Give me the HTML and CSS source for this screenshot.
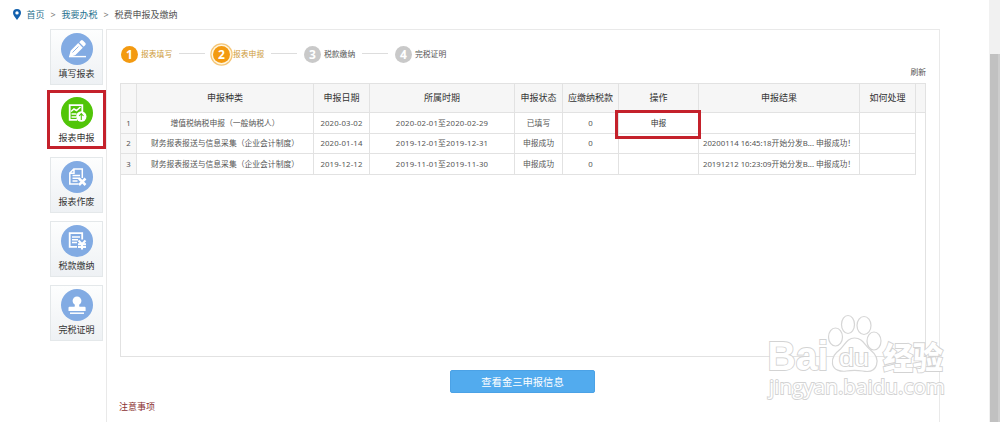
FILE: index.html
```html
<!DOCTYPE html>
<html lang="zh-CN">
<head>
<meta charset="utf-8">
<title>税费申报及缴纳</title>
<link rel="stylesheet" href="styles.css">
</head>
<body>
<div class="page">
  <div class="content">
    <nav class="crumbs">
      <svg class="pin" viewBox="0 0 8 11"><path fill="#1260ad" fill-rule="evenodd" d="M4 0a4 4 0 0 1 4 4C8 6.600 5.500 8.500 4 11 2.500 8.500 0 6.600 0 4a4 4 0 0 1 4-4zm0 2.200a1.700 1.700 0 1 0 0 3.400 1.700 1.700 0 0 0 0-3.400z"/></svg>
      <a class="link">首页</a><span class="sep">&gt;</span><a class="link">我要办税</a><span class="sep">&gt;</span><span>税费申报及缴纳</span>
    </nav>
    <div class="main">
      <aside class="side">
        <a class="tile">
          <svg class="ico" viewBox="0 0 32 32"><circle cx="16" cy="16" r="16" fill="#82abe3"/><path d="M8 24l1.600-6.300 7.600-7.600 4.600 4.600-7.600 7.600zM18.200 9.200l1.700-1.700q1-.8 2 0l2.500 2.500q.8 1 0 2l-1.700 1.700z" fill="#fff"/><path d="M8 23.600H25" stroke="#fff" stroke-width="1.400"/><path d="M11.500 19.500l6-6" stroke="#82abe3" stroke-width=".9"/></svg>
          <span>填写报表</span></a>
        <a class="tile active">
          <svg class="ico" viewBox="0 0 32 32"><circle cx="16" cy="16" r="16" fill="#51c508"/><path d="M21.300 15V8.200H8.700v14.600H16" fill="none" stroke="#fff" stroke-width="1.800"/><path d="M10 14.500l3-2.500 2.500 1.500 4-3.500M10.500 17h5M10.500 20h4.500" fill="none" stroke="#fff" stroke-width="1.600"/><circle cx="20.300" cy="19.500" r="5.200" fill="#fff"/><path d="M20.300 23v-6M18.100 19l2.200-2.400 2.200 2.400" fill="none" stroke="#51c508" stroke-width="1.100"/></svg>
          <span>报表申报</span></a>
        <a class="tile">
          <svg class="ico" viewBox="0 0 32 32"><circle cx="16" cy="16" r="16" fill="#82abe3"/><path d="M17.500 23H8.800V12l4-4h8.500v9M13 8v4.200H9M11.500 14.500h7.500M11.500 17.200h7.500M11.500 20h5" fill="none" stroke="#fff" stroke-width="1.500"/><path d="M18 17.500l6.500 6.500M24.500 17.500l-6.500 6.500" stroke="#fff" stroke-width="2.500"/></svg>
          <span>报表作废</span></a>
        <a class="tile">
          <svg class="ico" viewBox="0 0 32 32"><circle cx="16" cy="16" r="16" fill="#82abe3"/><path d="M21.200 14.500V8.200H8.700v13.600H16" fill="none" stroke="#fff" stroke-width="1.800"/><path d="M11 12h8M11 14.700h6M11 17.500h5" stroke="#fff" stroke-width="1.500"/><path d="M17.500 15.500l3.500 3.800 3.500-3.800M21 19v5.500M17 19.300h8M17 22h8" fill="none" stroke="#fff" stroke-width="2.100"/></svg>
          <span>税款缴纳</span></a>
        <a class="tile">
          <svg class="ico" viewBox="0 0 32 32"><circle cx="16" cy="16" r="16" fill="#82abe3"/><circle cx="16" cy="11.800" r="4.400" fill="#fff"/><path d="M14.200 14h3.600l.6 3.800h5.200q1 0 1 1V22H7.500v-3.200q0-1 1-1h5.100z" fill="#fff"/><path d="M9 24.200h14" stroke="#fff" stroke-width="1.500"/></svg>
          <span>完税证明</span></a>
      </aside>
      <section class="panel">
        <div class="steps">
          <div class="step done"><b>1</b><span>报表填写</span></div><i></i>
          <div class="step done current"><b>2</b><span>报表申报</span></div><i></i>
          <div class="step"><b>3</b><span>税款缴纳</span></div><i></i>
          <div class="step"><b>4</b><span>完税证明</span></div>
        </div>
        <div class="refresh">刷新</div>
        <div class="table">
          <div class="row head"><span></span><span>申报种类</span><span>申报日期</span><span>所属时期</span><span>申报状态</span><span>应缴纳税款</span><span>操作</span><span>申报结果</span><span>如何处理</span></div>
          <div class="row first"><span>1</span><span>增值税纳税申报（一般纳税人）</span><span class="date">2020-03-02</span><span class="date">2020-02-01至2020-02-29</span><span>已填写</span><span>0</span><span class="act">申报<em class="mark"></em></span><span></span><span></span></div>
          <div class="row"><span>2</span><span>财务报表报送与信息采集（企业会计制度）</span><span class="date">2020-01-14</span><span class="date">2019-12-01至2019-12-31</span><span>申报成功</span><span>0</span><span></span><span>20200114 16:45:18开始分发B... 申报成功！</span><span></span></div>
          <div class="row last"><span>3</span><span>财务报表报送与信息采集（企业会计制度）</span><span class="date">2019-12-12</span><span class="date">2019-11-01至2019-11-30</span><span>申报成功</span><span>0</span><span></span><span>20191212 10:23:09开始分发B... 申报成功！</span><span></span></div>
        </div>
        <button class="btn">查看金三申报信息</button>
        <div class="notes">注意事项</div>
      </section>
    </div>
  </div>
  <div class="scroll"><div class="thumb"></div></div>
  <svg class="brand" viewBox="0 0 190 90">
    <g class="shape">
      <ellipse cx="69.500" cy="25" rx="7" ry="9"/>
      <ellipse cx="82" cy="12.500" rx="6.500" ry="9"/>
      <ellipse cx="98" cy="13.500" rx="7" ry="9"/>
      <ellipse cx="108" cy="29" rx="7" ry="9"/>
      <path d="M88.500 26c8 0 10 7 16 12 5 4 8 9 6 15-2 7-9 7-14 6-6-1-10-1-16 0-6 1-13-1-14-7-1-7 3-11 8-15 5-5 7-11 14-11z"/>
    </g>
    <g class="word">
      <text x="1.500" y="58" font-size="40" textLength="61" lengthAdjust="spacingAndGlyphs">Bai</text>
      <text class="du" x="73" y="54" font-size="23" textLength="30" lengthAdjust="spacingAndGlyphs">du</text>
      <text class="cn" x="117" y="57" font-size="31" textLength="60" lengthAdjust="spacingAndGlyphs">经验</text>
      <text class="site" x="3" y="81.500" font-size="20.500" textLength="176" lengthAdjust="spacingAndGlyphs">jingyan.baidu.com</text>
    </g>
  </svg>
</div>
</body>
</html>
```
FILE: styles.css
```css
* { box-sizing: border-box; }
body { margin: 0; background: #fff; color: #555; font: 9px/12px "Noto Sans", "Noto Sans CJK SC", sans-serif; }
.page { position: relative; display: flex; width: 1000px; height: 422px; overflow: hidden; }
.content { width: 989px; }
.crumbs { display: flex; align-items: center; height: 29px; padding-left: 13px; white-space: nowrap; }
.pin { width: 8px; height: 11px; margin-right: 5.500px; }
.link { color: #28728f; }
.sep { width: 17px; text-align: center; color: #777; font-size: 9px; }
.main { display: flex; padding-left: 50px; gap: 3px; }
.side { display: flex; flex-direction: column; gap: 8px; width: 53px; }
.tile { display: flex; flex-direction: column; align-items: center; gap: 3px; width: 53px; height: 56px; padding-top: 3px; border: 1px solid #e4e8ea; background: linear-gradient(#fdfefe, #eef1f4); color: #333; white-space: nowrap; }
.tile.active { height: 53px; margin-bottom: 3px; background: #fff; outline: 3px solid #c4212b; border-color: #fff; }
.ico { width: 32px; height: 32px; flex: none; }
.panel { display: flex; flex-direction: column; width: 834px; height: 400px; padding: 13px 13px 0 13px; border: 1px solid #e9e9e9; }
.steps { display: flex; align-items: center; height: 22px; margin-left: 1px; font-size: 7.8px; white-space: nowrap; }
.step { display: flex; align-items: center; gap: 3px; width: 52px; }
.step b { width: 17px; height: 17px; border-radius: 50%; background: #c9c9c9; color: #fff; font: bold 12px/17px "Open Sans", "Noto Sans", sans-serif; text-align: center; flex: none; }
.step.done { color: #cd9b3a; }
.step.done b { background: #f39a11; }
.step.current b { box-shadow: 0 0 0 1.5px #fff6df, 0 0 0 2.700px #f5c678; }
.steps i { width: 26px; height: 1px; margin: 0 7px 2px 6px; background: #ddd; }
.steps i:nth-of-type(1) { margin-right: 8px; }
.refresh { height: 18px; text-align: right; font-size: 7.800px; line-height: 14px; }
.table { width: 806px; height: 274px; border: 1px solid #e2e2e2; font-size: 7.800px; }
.row { display: grid; grid-template-columns: 16px 177px 56px 145px 48px 56px 80px 161px 56px; height: 20px; white-space: nowrap; }
.row span { display: flex; align-items: center; justify-content: center; padding-bottom: 1px; border-right: 1px solid #e2e2e2; border-bottom: 1px solid #e2e2e2; }
.row span:first-child { background: #f7f7f7; }
.row.head { height: 29px; background: #f6f6f6; border-bottom: 1px solid #e2e2e2; color: #333; font-size: 9px; }
.row.head span { border-bottom: 0; }
.row.first, .row.last { height: 21px; }
.row span.date { letter-spacing: .15px; }
.row span.act { position: relative; color: #333; }
.mark { position: absolute; left: -4px; top: -3px; width: 86px; height: 29px; border: 3px solid #c4212b; }
.btn { width: 145px; height: 23px; margin: 13px 0 0 330px; padding: 0; border: 1px solid #4ba2e6; border-radius: 2px; background: #52abee; color: #fff; font: 10.300px/21px "Noto Sans CJK SC", sans-serif; }
.notes { margin: 8px 0 0 -1px; color: #8b3232; }
.scroll { width: 11px; padding: 54px 0 0 1px; background: #f1f1f1; }
.thumb { width: 10px; height: 368px; background: #c1c1c1; border-right: 2px solid #cdcdcd; }
.brand { position: absolute; left: 766px; top: 312px; width: 190px; height: 90px; overflow: visible; }
.shape { fill: rgba(255, 255, 255, .8); stroke: #d6d6d6; stroke-width: 1.200; }
.word { fill: #fff; stroke: #d3d3d3; stroke-width: 1.800; paint-order: stroke; font-family: "Liberation Sans", Arial, sans-serif; font-weight: bold; }
.du { font-weight: normal; }
.cn { font-family: "Noto Sans CJK SC", sans-serif; font-weight: 900; }
.site { font-family: "Open Sans", sans-serif; font-weight: normal; }
```
